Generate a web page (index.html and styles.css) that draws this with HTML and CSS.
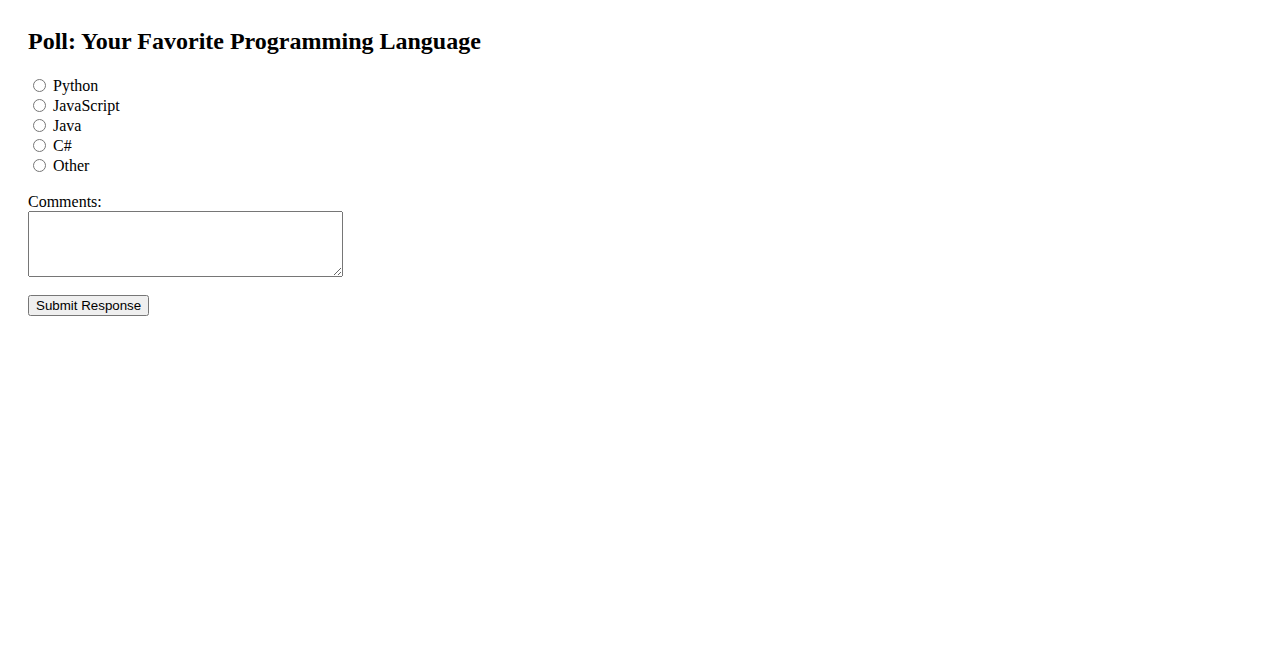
FILE: index.html
```html
<!DOCTYPE html>
<html>
<head>
<meta charset="utf-8">
<link rel="stylesheet" href="styles.css">
</head>
<body>
<form class="poll">
  <h2 class="poll-title">Poll: Your Favorite Programming Language</h2>
  <div class="options">
    <label class="option"><input type="radio" name="lang" value="python" class="radio">Python</label>
    <label class="option"><input type="radio" name="lang" value="javascript" class="radio">JavaScript</label>
    <label class="option"><input type="radio" name="lang" value="java" class="radio">Java</label>
    <label class="option"><input type="radio" name="lang" value="csharp" class="radio">C#</label>
    <label class="option"><input type="radio" name="lang" value="other" class="radio">Other</label>
  </div>
  <label class="comments-label" for="comments">Comments:</label>
  <textarea id="comments" class="comments"></textarea>
  <div class="actions">
    <button type="submit" class="submit">Submit Response</button>
  </div>
</form>
</body>
</html>
```

FILE: styles.css
```css
html, body {
  background: #ffffff;
}
body {
  margin: 0;
  padding: 28px;
  font-family: "Liberation Serif", "Times New Roman", serif;
  font-size: 16px;
  color: #000;
}
.poll {
  display: flex;
  flex-direction: column;
  align-items: flex-start;
}
.poll-title {
  margin: 0 0 22px 0;
  font-size: 24px;
  font-weight: bold;
  line-height: 26px;
}
.options {
  display: flex;
  flex-direction: column;
  margin-bottom: 16px;
}
.option {
  display: flex;
  align-items: center;
  height: 20px;
}
.radio {
  width: 13px;
  height: 13px;
  margin: 0 7px 2px 5px;
}
.comments-label {
  display: block;
  line-height: 19px;
}
.comments {
  box-sizing: border-box;
  width: 315px;
  height: 66px;
  margin: 0;
  font-family: "Liberation Mono", monospace;
  font-size: 13.333px;
}
.actions {
  margin-top: 18px;
}
.submit {
  margin: 0;
  height: 21px;
  padding: 1px 6px;
  font-family: "Liberation Sans", Arial, sans-serif;
  font-size: 13.333px;
}
```
